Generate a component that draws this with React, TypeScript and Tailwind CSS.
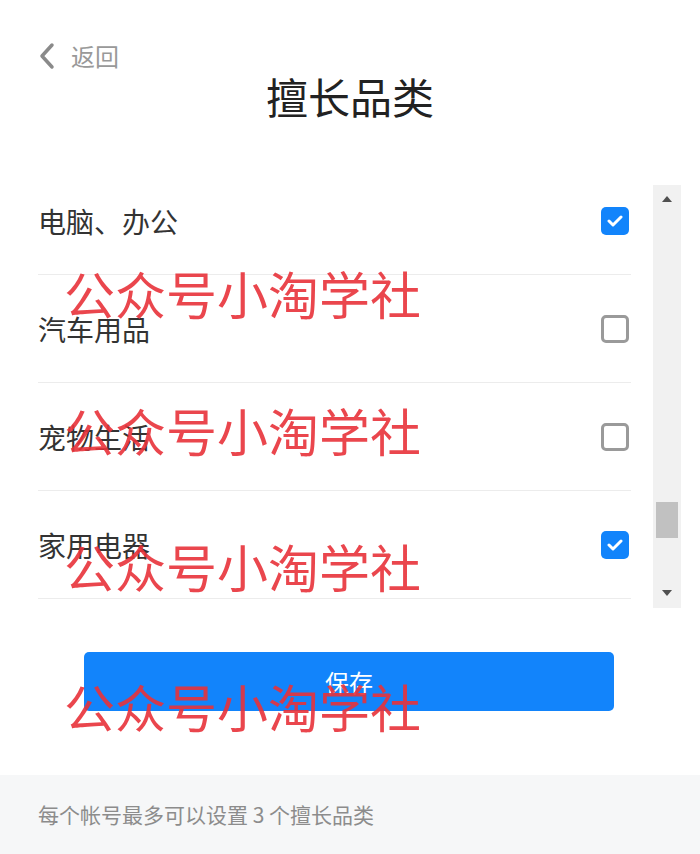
// Category picker page: back link, title, scrollable checkbox list, save button, footer hint.

import { useState } from "react";

const FONT = { fontFamily: '"Noto Sans CJK SC", "Noto Sans", sans-serif' };

const CATEGORIES = [
  { name: "电脑、办公", checked: true },
  { name: "汽车用品", checked: false },
  { name: "宠物生活", checked: false },
  { name: "家用电器", checked: true },
];

const WATERMARK_TOPS = ["top-[268px]", "top-[405px]", "top-[541px]", "top-[681px]"];

export default function App() {
  const [items, setItems] = useState(CATEGORIES);

  const toggle = (i: number) =>
    setItems((prev) => prev.map((it, j) => (j === i ? { ...it, checked: !it.checked } : it)));

  return (
    <div className="relative h-[854px] w-[700px] overflow-hidden bg-white text-[#333]" style={FONT}>
      {/* header */}
      <div className="flex h-[185px] flex-col">
        <button className="ml-[38px] mt-[42px] flex items-center gap-[15px] text-[#999]">
          <svg width="18" height="28" viewBox="0 0 18 28" fill="none">
            <path d="M14 3 L4 14 L14 25" stroke="#8a8a8a" strokeWidth="3.5" strokeLinecap="round" strokeLinejoin="round" />
          </svg>
          <span className="text-[24px] leading-none">返回</span>
        </button>
        <h1 className="-mt-[2px] text-center text-[42px] leading-[56px] font-normal text-[#222]">擅长品类</h1>
      </div>

      {/* list with scrollbar */}
      <div className="flex h-[423px]">
        <div className="flex-1 overflow-hidden pl-[38px] pr-[22px]">
          <ul className="-mt-[18px]">
            {items.map((it, i) => (
              <li
                key={it.name}
                onClick={() => toggle(i)}
                className="flex h-[108px] items-center justify-between border-b border-[#ececec]"
              >
                <span className="text-[28px] leading-none">{it.name}</span>
                {it.checked ? (
                  <span className="mr-[2px] flex h-[28px] w-[28px] items-center justify-center rounded-[5px] bg-[#1284fb]">
                    <svg width="16" height="12" viewBox="0 0 16 12" fill="none">
                      <path d="M2 6 L6 10 L14 2" stroke="white" strokeWidth="3" strokeLinecap="round" strokeLinejoin="round" />
                    </svg>
                  </span>
                ) : (
                  <span className="mr-[2px] h-[28px] w-[28px] rounded-[5px] border-[3px] border-[#9a9a9a] bg-white" />
                )}
              </li>
            ))}
          </ul>
        </div>
        <div className="mr-[19px] flex w-[28px] flex-col items-center bg-[#f1f1f1]">
          <svg className="mt-[11px]" width="10" height="6" viewBox="0 0 10 6">
            <path d="M0 6 L5 0 L10 6 Z" fill="#505050" />
          </svg>
          <div className="flex-1" />
          <div className="mb-[52px] h-[36px] w-[22px] bg-[#c1c1c1]" />
          <svg className="mb-[12px]" width="10" height="6" viewBox="0 0 10 6">
            <path d="M0 0 L5 6 L10 0 Z" fill="#505050" />
          </svg>
        </div>
      </div>

      {/* save */}
      <div className="mt-[44px] flex justify-center pr-[2px]">
        <button className="h-[59px] w-[530px] rounded-[5px] bg-[#1284fb] text-[24px] text-white">保存</button>
      </div>

      {/* footer hint */}
      <div className="absolute bottom-0 left-0 right-0 flex h-[79px] items-center bg-[#f6f7f8] px-[38px]">
        <span className="text-[21px] text-[#8c8c8c]">每个帐号最多可以设置 3 个擅长品类</span>
      </div>

      {/* watermark overlay */}
      {WATERMARK_TOPS.map((t) => (
        <div
          key={t}
          className={`pointer-events-none absolute left-[64px] ${t} text-[51px] leading-none text-[#e8323a]/90`}
        >
          公众号小淘学社
        </div>
      ))}
    </div>
  );
}
